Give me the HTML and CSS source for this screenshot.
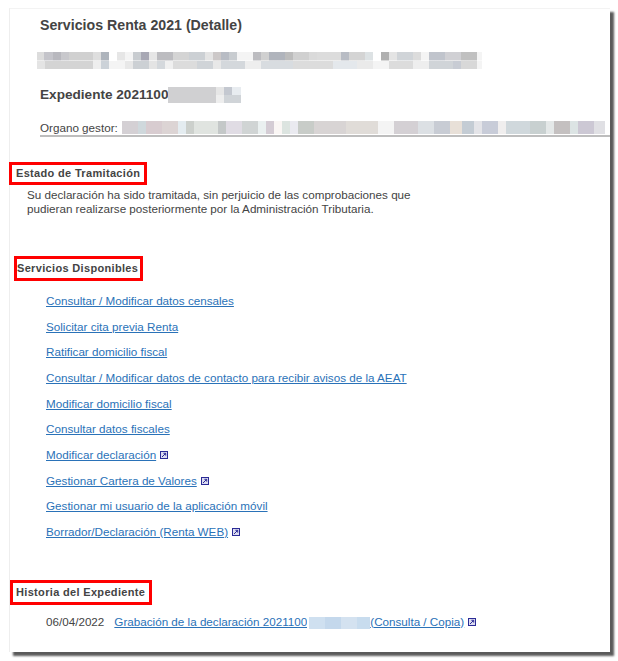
FILE: index.html
```html
<!DOCTYPE html>
<html lang="es">
<head>
<meta charset="utf-8">
<title>Servicios Renta 2021 (Detalle)</title>
<link rel="stylesheet" href="styles.css">
</head>
<body>
<main class="panel">
  <header class="head">
    <h1 class="title">Servicios Renta 2021 (Detalle)</h1>
    <div class="blur blur-name"></div>
    <h2 class="expediente">Expediente 2021100<span class="blur blur-exp"></span></h2>
    <div class="organo"><span>Organo gestor:</span><span class="blur blur-org"></span></div>
  </header>

  <section class="estado">
    <h3 class="mark mark-estado">Estado de Tramitación</h3>
    <p class="status">Su declaración ha sido tramitada, sin perjuicio de las comprobaciones que<br>pudieran realizarse posteriormente por la Administración Tributaria.</p>
  </section>

  <section class="servicios">
    <h3 class="mark mark-servicios">Servicios Disponibles</h3>
    <ul class="links">
      <li><a href="#">Consultar / Modificar datos censales</a></li>
      <li><a href="#">Solicitar cita previa Renta</a></li>
      <li><a href="#">Ratificar domicilio fiscal</a></li>
      <li><a href="#">Consultar / Modificar datos de contacto para recibir avisos de la AEAT</a></li>
      <li><a href="#">Modificar domicilio fiscal</a></li>
      <li><a href="#">Consultar datos fiscales</a></li>
      <li><a href="#">Modificar declaración</a><svg class="ext" viewBox="0 0 8 8"><rect width="8" height="8" fill="#2b2b96"/><rect x="1" y="1" width="6" height="6" fill="#dcdcf0"/><path d="M2 6 5.5 2.5M3.4 2.3H5.7V4.6" fill="none" stroke="#2b2b96" stroke-width="1"/></svg></li>
      <li><a href="#">Gestionar Cartera de Valores</a><svg class="ext" viewBox="0 0 8 8"><rect width="8" height="8" fill="#2b2b96"/><rect x="1" y="1" width="6" height="6" fill="#dcdcf0"/><path d="M2 6 5.5 2.5M3.4 2.3H5.7V4.6" fill="none" stroke="#2b2b96" stroke-width="1"/></svg></li>
      <li><a href="#">Gestionar mi usuario de la aplicación móvil</a></li>
      <li><a href="#">Borrador/Declaración (Renta WEB)</a><svg class="ext" viewBox="0 0 8 8"><rect width="8" height="8" fill="#2b2b96"/><rect x="1" y="1" width="6" height="6" fill="#dcdcf0"/><path d="M2 6 5.5 2.5M3.4 2.3H5.7V4.6" fill="none" stroke="#2b2b96" stroke-width="1"/></svg></li>
    </ul>
  </section>

  <section class="historia">
    <h3 class="mark mark-historia">Historia del Expediente</h3>
    <div class="entry">
      <span class="date">06/04/2022</span>
      <a href="#">Grabación de la declaración 2021100<span class="blur blur-link"></span>(Consulta / Copia)</a><svg class="ext" viewBox="0 0 8 8"><rect width="8" height="8" fill="#2b2b96"/><rect x="1" y="1" width="6" height="6" fill="#dcdcf0"/><path d="M2 6 5.5 2.5M3.4 2.3H5.7V4.6" fill="none" stroke="#2b2b96" stroke-width="1"/></svg>
    </div>
  </section>
</main>
</body>
</html>
```
FILE: styles.css
```css
html, body {
  margin: 0;
  padding: 0;
  background: #fff;
}

body {
  display: flow-root;
  height: 661px;
  overflow: hidden;
  font-family: "Liberation Sans", Arial, sans-serif;
  font-size: 11.66px;
  color: #444;
}

.panel {
  box-sizing: border-box;
  width: 601px;
  height: 644px;
  margin: 8px 0 0 9px;
  border-top: 1px solid #f3f3f3;
  border-left: 1px solid #eee;
  box-shadow: 4px 4px 2px #5a5a5a;
  background: #fff;
}

.head {
  padding: 8px 0 0 30px;
}

.title,
.expediente {
  margin: 0;
  font-size: 14.2px;
  line-height: 16px;
  font-weight: bold;
  color: #444;
}

.blur {
  display: block;
}

.blur-name {
  width: 445px;
  height: 17px;
  margin: 19px 0 0 -3px;
  background:
    linear-gradient(90deg, #dcdcdc 0 7px, #c4c4ca 7px 16px, #b8b8be 16px 24px, #c8c8cc 24px 32px, #d0d0d0 32px 56px, #dedede 56px 64px, #aeb4bc 64px 72px, #fff 72px 80px, #e6e6e6 80px 88px, #f4f4f4 88px 96px, #c8ccd0 96px 104px, #a8a8b4 104px 112px, #e6e6e6 112px 120px, #bcbcc0 120px 136px, #d4d4d4 136px 152px, #ccd0d4 152px 168px, #e4e4e4 168px 176px, #ccc8c8 176px 184px, #b8bcc4 184px 192px, #c8ccd0 192px 200px, #f4f4f4 200px 216px, #bcbcc0 216px 224px, #d0d0d0 224px 232px, #b0b4bc 232px 248px, #bcbcbc 248px 256px, #d0d0d0 256px 272px, #dadada 272px 280px, #dcdcdc 280px 304px, #b8bcc4 304px 312px, #d4d4d4 312px 328px, #dde2e4 328px 336px, #fff 336px 344px, #b0b0b0 344px 352px, #e4e4e4 352px 360px, #d0d4d8 360px 376px, #dcdcdc 376px 384px, #f4f4f4 384px 392px, #c0c4cc 392px 408px, #d0d0d4 408px 424px, #c0c0c0 424px 440px, #f4f4f4 440px 445px) top / 100% 50% no-repeat,
    linear-gradient(90deg, #e4e4e4 0 8px, #d4d4d4 8px 56px, #eee 56px 64px, #ccd2d8 64px 72px, #f4f4f4 72px 88px, #e8e8e8 88px 96px, #ccd0d4 96px 112px, #e4e4e4 112px 120px, #d4d8dc 120px 128px, #f0f0f0 128px 136px, #dcdcdc 136px 160px, #d0d4d8 160px 176px, #e8e8e8 176px 184px, #d4d8dc 184px 208px, #eee 208px 224px, #d8dce0 224px 256px, #dcdcdc 256px 296px, #e4e8ec 296px 320px, #eaeaea 320px 336px, #f4f4f4 336px 352px, #dcdcdc 352px 376px, #eee 376px 392px, #d0d4d8 392px 416px, #c8ccd4 416px 424px, #d8d8d8 424px 440px, #f4f4f4 440px 445px) bottom / 100% 50% no-repeat;
}

.expediente {
  display: flex;
  align-items: center;
  margin-top: 18px;
  font-size: 13.6px;
}

.blur-exp {
  width: 73px;
  height: 16px;
  background:
    linear-gradient(90deg, #d0d0d2 0 48px, #e6e6e6 48px 56px, #c4c8d0 56px 64px, #e8ecf0 64px 73px) top / 100% 50% no-repeat,
    linear-gradient(90deg, #d0d0d2 0 48px, #eeeeee 48px 56px, #d0d4d8 56px 73px) bottom / 100% 50% no-repeat;
}

.organo {
  display: flex;
  align-items: flex-start;
  height: 16px;
  box-sizing: border-box;
  margin-top: 18px;
  border-bottom: 2px solid #bdbdbd;
  line-height: 14px;
}

.blur-org {
  width: 483px;
  height: 13px;
  margin-left: 4px;
  background:
    linear-gradient(90deg, #d4d0d4 0 16px, #cfd8dc 16px 24px, #d8ccd0 24px 40px, #dcd4d4 40px 56px, #e4ecf0 56px 64px, #ccd0cc 64px 72px, #e0e4e0 72px 96px, #c4c8c8 96px 104px, #e0dce4 104px 120px, #d0d4d4 120px 136px, #eaf0f0 136px 144px, #d4ccd4 144px 152px, #faf6f4 152px 160px, #dce4e0 160px 168px, #eaeaf0 168px 176px, #c8ccc8 176px 192px, #d8d4d4 192px 224px, #e0dcd8 224px 256px, #f4f4f4 256px 272px, #d4d0d4 272px 296px, #dce0e4 296px 312px, #c8ccd4 312px 328px, #e8e0d8 328px 340px, #c4ccd4 340px 352px, #e4e4e8 352px 360px, #c8ccd8 360px 376px, #f0eeee 376px 384px, #d0d8dc 384px 408px, #c8d0d0 408px 424px, #e4e8e8 424px 432px, #c4c0c0 432px 448px, #dce4e4 448px 456px, #ccc8d4 456px 472px, #e0e0e4 472px 483px);
}

.mark {
  display: inline-block;
  box-sizing: border-box;
  margin: 0;
  border: 3px solid #f00;
  font-size: 11px;
  line-height: 17px;
  font-weight: bold;
  letter-spacing: 0.33px;
  color: #444;
  white-space: nowrap;
}

.estado {
  margin-top: 25px;
}

.mark-estado {
  display: block;
  width: 138px;
  height: 23px;
  margin-left: -1px;
  padding-left: 4px;
}

.status {
  margin: 3px 0 0 17px;
  line-height: 14px;
}

.servicios {
  margin-top: 40px;
}

.mark-servicios {
  display: block;
  width: 129px;
  height: 25px;
  margin-left: 4px;
  padding: 1px 0 0 0;
}

.links {
  margin: 7px 0 0 36px;
  padding: 0;
  list-style: none;
  line-height: 25.65px;
}

a {
  color: #2a72b8;
  text-decoration: underline;
}

.ext {
  width: 8px;
  height: 8px;
  margin-left: 4px;
}

.historia {
  margin-top: 35px;
}

.mark-historia {
  display: block;
  width: 142px;
  height: 25px;
  padding: 1px 0 0 3px;
}

.entry {
  display: flex;
  align-items: center;
  margin: 8px 0 0 36px;
  line-height: 18px;
}

.date {
  margin-right: 10px;
}

.blur-link {
  display: inline-block;
  vertical-align: -3px;
  width: 63px;
  height: 12px;
  background: linear-gradient(90deg, #fff 0 2px, #cfe0f0 2px 18px, #c4d8ec 18px 34px, #d4e2f0 34px 50px, #c8dcee 50px 63px);
}
```
